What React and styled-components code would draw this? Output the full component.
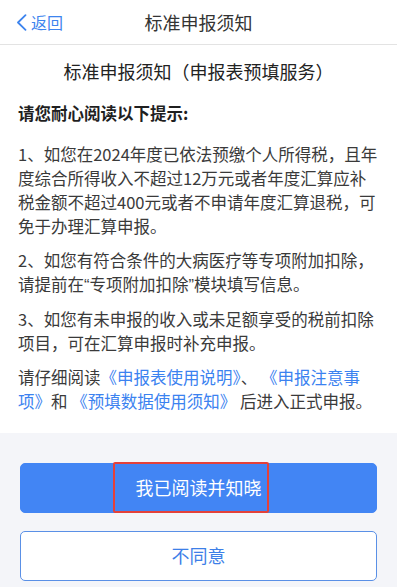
import React from "react";
import styled, { createGlobalStyle } from "styled-components";

const Global = createGlobalStyle`
  html, body { margin: 0; padding: 0; background: #fff; }
  body { font-family: "Noto Sans CJK SC", "Noto Sans", sans-serif; -webkit-font-smoothing: antialiased; }
  * { box-sizing: border-box; }
`;

const Page = styled.div`
  width: 397px;
  min-height: 587px;
  display: flex;
  flex-direction: column;
  background: #fff;
`;

const Header = styled.header`
  height: 45px;
  display: grid;
  grid-template-columns: 80px 1fr 80px;
  align-items: center;
  border-bottom: 1px solid #e3e3e3;
`;

const Back = styled.div`
  display: flex;
  align-items: center;
  gap: 4px;
  padding-left: 16px;
  color: #3d84ee;
  font-size: 16px;
  line-height: 1;
`;

const HeaderTitle = styled.h1`
  margin: 0;
  text-align: center;
  font-size: 18px;
  font-weight: 400;
  color: #333;
`;

const Content = styled.main`
  padding: 14px 18px 20px;
  color: #3a3a3a;
`;

const Subtitle = styled.h2`
  margin: 0 0 18px;
  text-align: center;
  font-size: 18px;
  line-height: 24px;
  font-weight: 400;
  color: #222;
`;

const Lead = styled.h3`
  margin: 0 0 17px;
  font-size: 16.5px;
  line-height: 24px;
  font-weight: 700;
  color: #1f1f1f;
`;

const Para = styled.p`
  margin: 0 0 10px;
  font-size: 16.5px;
  line-height: 24px;
  &:last-child { margin-bottom: 0; }
`;

const Quote = styled.span`
  font-family: "Liberation Sans", sans-serif;
`;

const Link = styled.a`
  color: #3b82f0;
  text-decoration: none;
`;

const Footer = styled.footer`
  flex: 1;
  background: #f4f5f9;
  padding: 30px 20px 6px;
  display: flex;
  flex-direction: column;
  gap: 18px;
`;

const Button = styled.button`
  position: relative;
  height: 50px;
  width: 100%;
  border-radius: 5px;
  font-family: inherit;
  font-size: 18px;
  border: 1px solid ${(p) => (p.$primary ? "#4285f4" : "#5a90e6")};
  background: ${(p) => (p.$primary ? "#4285f4" : "#fff")};
  color: ${(p) => (p.$primary ? "#fff" : "#3d7fe8")};
  display: flex;
  align-items: center;
  justify-content: center;
  padding: 0 0 2px;
`;

const Highlight = styled.span`
  position: absolute;
  left: 92px;
  top: -2px;
  width: 156px;
  height: 51px;
  border: 2px solid #e4413a;
  border-radius: 2px;
  pointer-events: none;
`;

export default function App() {
  return (
    <>
      <Global />
      <Page>
        <Header>
          <Back>
            <svg width="11" height="17" viewBox="0 0 11 17" fill="none">
              <path d="M9.5 1.2 L2 8.5 L9.5 15.8" stroke="#3d84ee" strokeWidth="1.8" strokeLinecap="round" strokeLinejoin="round" />
            </svg>
            <span>返回</span>
          </Back>
          <HeaderTitle>标准申报须知</HeaderTitle>
          <div />
        </Header>
        <Content>
          <Subtitle>标准申报须知（申报表预填服务）</Subtitle>
          <Lead>请您耐心阅读以下提示:</Lead>
          <Para>
            1、如您在2024年度已依法预缴个人所得税，且年度综合所得收入不超过12万元或者年度汇算应补税金额不超过400元或者不申请年度汇算退税，可免于办理汇算申报。
          </Para>
          <Para>
            2、如您有符合条件的大病医疗等专项附加扣除，请提前在<Quote>“</Quote>专项附加扣除<Quote>”</Quote>模块填写信息。
          </Para>
          <Para>
            3、如您有未申报的收入或未足额享受的税前扣除项目，可在汇算申报时补充申报。
          </Para>
          <Para>
            请仔细阅读<Link>《申报表使用说明》</Link>、 <Link>《申报注意事项》</Link>和 <Link>《预填数据使用须知》</Link> 后进入正式申报。
          </Para>
        </Content>
        <Footer>
          <Button $primary>
            我已阅读并知晓
            <Highlight />
          </Button>
          <Button>不同意</Button>
        </Footer>
      </Page>
    </>
  );
}
